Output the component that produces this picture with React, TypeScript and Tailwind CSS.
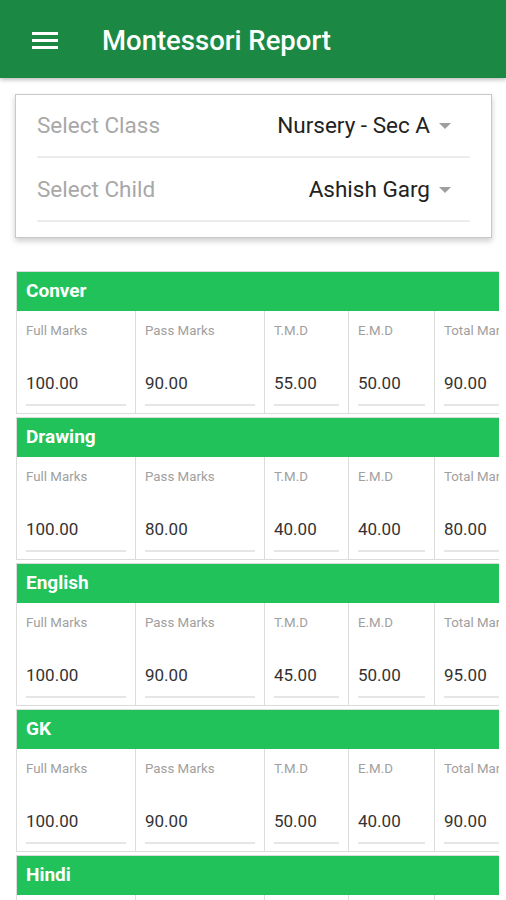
import React from "react";

const sections = [
  { name: "Conver", v: ["100.00", "90.00", "55.00", "50.00", "90.00"] },
  { name: "Drawing", v: ["100.00", "80.00", "40.00", "40.00", "80.00"] },
  { name: "English", v: ["100.00", "90.00", "45.00", "50.00", "95.00"] },
  { name: "GK", v: ["100.00", "90.00", "50.00", "40.00", "90.00"] },
  { name: "Hindi", v: ["100.00", "90.00", "50.00", "40.00", "90.00"] },
];

const cols = [
  { label: "Full Marks", w: "w-[119px]" },
  { label: "Pass Marks", w: "w-[129px]" },
  { label: "T.M.D", w: "w-[84px]" },
  { label: "E.M.D", w: "w-[86px]" },
  { label: "Total Marks", w: "w-[110px]" },
];

function Caret() {
  return (
    <svg width="14" height="8" viewBox="0 0 14 8" className="ml-[8px]">
      <path d="M1 1 L13 1 L7 7 Z" fill="#9e9e9e" />
    </svg>
  );
}

export default function App() {
  return (
    <div
      className="w-[506px] h-[900px] overflow-hidden bg-white"
      style={{ fontFamily: "Roboto, 'Noto Sans', sans-serif" }}
    >
      <div className="h-[78px] bg-[#1b8943] flex items-center shadow-[0_2px_4px_rgba(0,0,0,0.25)] relative z-10">
        <svg width="26" height="20" viewBox="0 0 26 20" className="ml-[32px] mt-[2px]">
          <rect x="0" y="2" width="26" height="3" fill="white" />
          <rect x="0" y="9" width="26" height="3" fill="white" />
          <rect x="0" y="16" width="26" height="3" fill="white" />
        </svg>
        <div className="ml-[44px] mt-[3px] text-white text-[27.5px] font-medium">
          Montessori Report
        </div>
      </div>

      <div className="mt-[16px] ml-[15px] w-[477px] h-[144px] border border-[#c8c8c8] shadow-[0_3px_6px_rgba(0,0,0,0.2)] px-[21px]">
        <div className="h-[63px] flex items-center justify-between border-b-2 border-[#ececec]">
          <span className="text-[22.5px] text-[#a8a8a8]">Select Class</span>
          <span className="flex items-center text-[22.5px] text-[#222] pr-[18px]">
            Nursery - Sec A
            <Caret />
          </span>
        </div>
        <div className="h-[64px] flex items-center justify-between border-b-2 border-[#ececec] pt-[2px]">
          <span className="text-[22.5px] text-[#a8a8a8]">Select Child</span>
          <span className="flex items-center text-[22.5px] text-[#222] pr-[18px]">
            Ashish Garg
            <Caret />
          </span>
        </div>
      </div>

      <div className="mt-[33px] ml-[16px] w-[483px] overflow-hidden">
        {sections.map((s) => (
          <div key={s.name} className="w-[540px] border border-[#dcdcdc] mb-[3px]">
            <div className="h-[39px] bg-[#21c25a] flex items-center pl-[9px] text-white text-[19px] font-bold">
              {s.name}
            </div>
            <div className="h-[102px] flex">
              {cols.map((c, i) => (
                <div
                  key={c.label}
                  className={`${c.w} shrink-0 border-r border-[#dcdcdc] px-[9px] flex flex-col`}
                >
                  <div className="pt-[12px] text-[13.3px] text-[#a0a0a0] leading-[16px] whitespace-nowrap">
                    {c.label}
                  </div>
                  <div className="mt-[34px] text-[17px] text-[#333] leading-[20px]">
                    {s.v[i]}
                  </div>
                  <div className="mt-[11px] h-[2px] bg-[#e6e6e6]" />
                </div>
              ))}
            </div>
          </div>
        ))}
      </div>
    </div>
  );
}
